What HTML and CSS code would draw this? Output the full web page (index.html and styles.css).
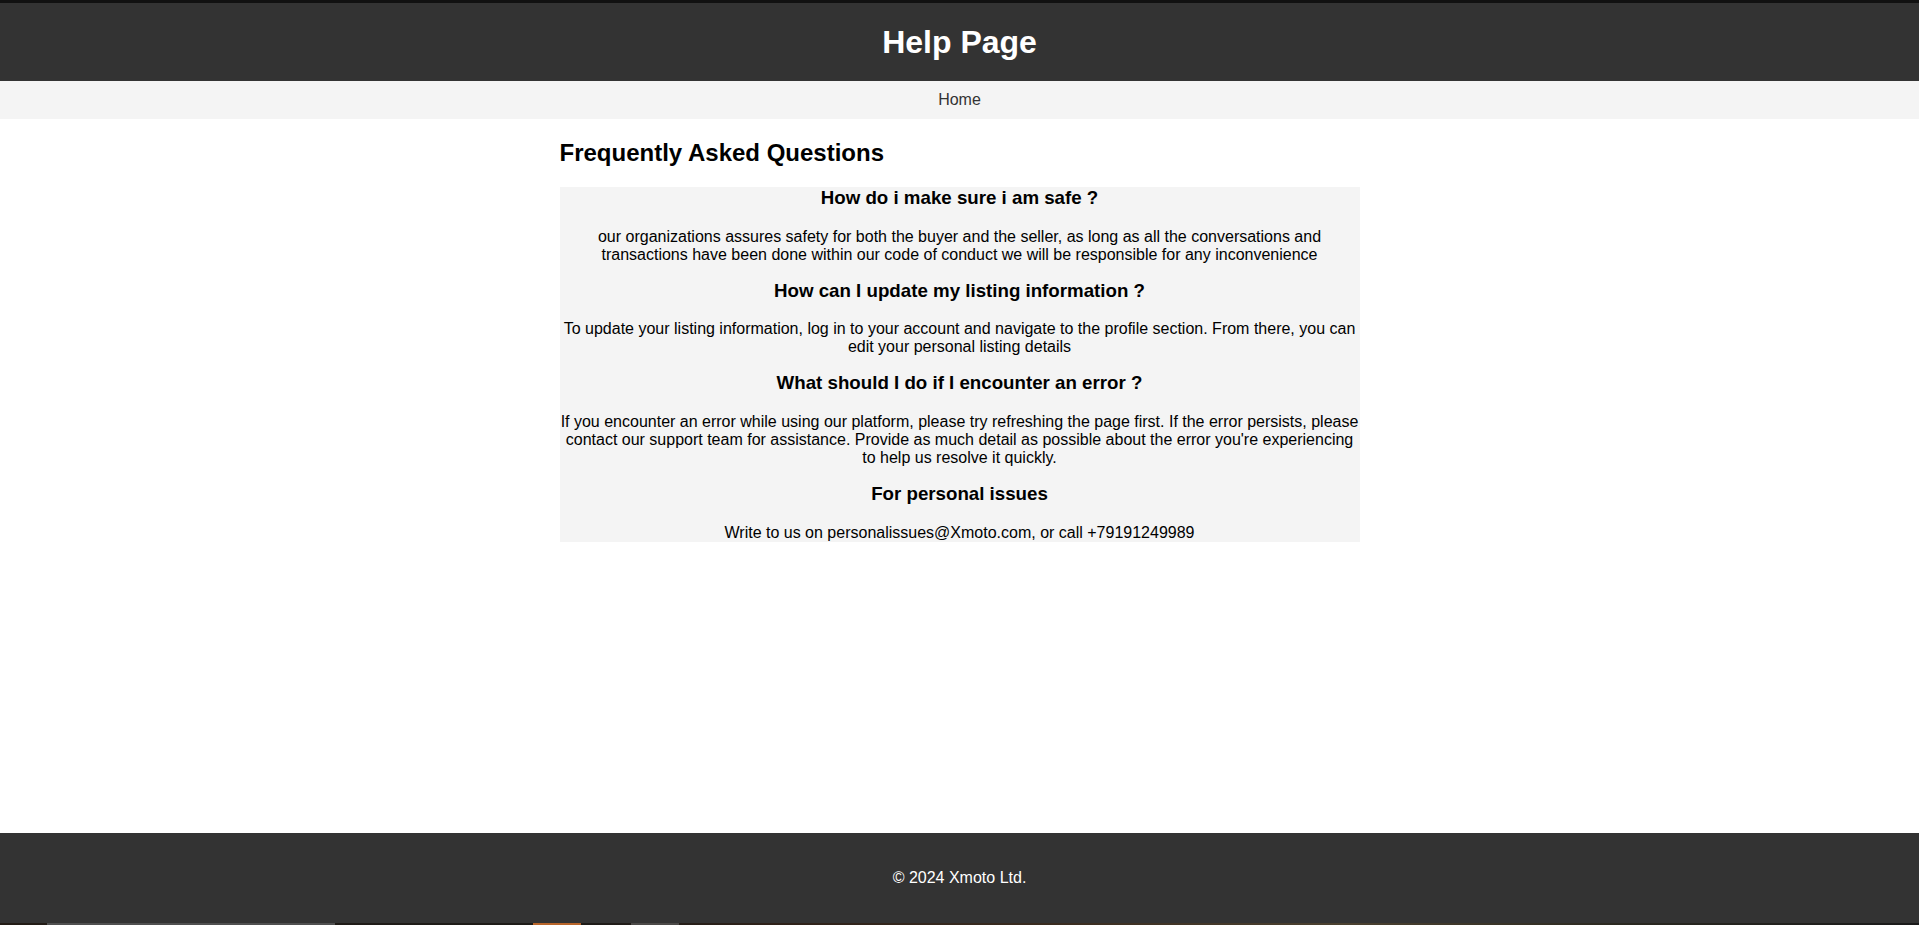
FILE: index.html
```html
<!DOCTYPE html>
<html lang="en">
<head>
<meta charset="utf-8">
<title>Help Page</title>
<link rel="stylesheet" href="styles.css">
</head>
<body>
<div class="page">
  <header class="site-header">
    <h1 class="site-title">Help Page</h1>
  </header>
  <nav class="site-nav">
    <a class="nav-link" href="#">Home</a>
  </nav>
  <main class="content">
    <h2 class="section-title">Frequently Asked Questions</h2>
    <div class="faq">
      <h3 class="faq-q">How do i make sure i am safe ?</h3>
      <p class="faq-a">our organizations assures safety for both the buyer and the seller, as long as all the conversations and transactions have been done within our code of conduct we will be responsible for any inconvenience</p>
      <h3 class="faq-q">How can I update my listing information ?</h3>
      <p class="faq-a">To update your listing information, log in to your account and navigate to the profile section. From there, you can edit your personal listing details</p>
      <h3 class="faq-q">What should I do if I encounter an error ?</h3>
      <p class="faq-a">If you encounter an error while using our platform, please try refreshing the page first. If the error persists, please contact our support team for assistance. Provide as much detail as possible about the error you're experiencing to help us resolve it quickly.</p>
      <h3 class="faq-q">For personal issues</h3>
      <p class="faq-a">Write to us on personalissues@Xmoto.com, or call +79191249989</p>
    </div>
  </main>
  <footer class="site-footer">
    <p class="copyright">&copy; 2024 Xmoto Ltd.</p>
    <div class="taskbar">
      <span class="tb-seg tb-window"></span>
      <span class="tb-seg tb-orange"></span>
      <span class="tb-seg tb-gray"></span>
    </div>
  </footer>
</div>
</body>
</html>
```

FILE: styles.css
```css
html, body {
  margin: 0;
  padding: 0;
}

body {
  font-family: "Liberation Sans", Arial, sans-serif;
  font-size: 16px;
  color: #000;
  background: #fff;
}

.page {
  min-height: 925px;
  display: flex;
  flex-direction: column;
}

.site-header {
  background: #333;
  color: #fff;
  border-top: 3px solid #111;
  padding: 21px 0 20px;
  text-align: center;
}

.site-title {
  margin: 0;
  font-size: 32px;
  font-weight: bold;
}

.site-nav {
  background: #f4f4f4;
  padding: 10px 0;
  text-align: center;
}

.nav-link {
  color: #333;
  text-decoration: none;
}

.content {
  flex: 1;
  width: 800px;
  margin: 0 auto;
}

.section-title {
  font-size: 24px;
  margin: 20px 0;
}

.faq {
  background: #f4f4f4;
  text-align: center;
}

.faq-q {
  font-size: 18.72px;
  margin: 16px 0 18.72px;
}

.faq-a {
  margin: 16px 0;
}

.site-footer {
  position: relative;
  background: #333;
  color: #fff;
  height: 92px;
  display: flex;
  align-items: center;
  justify-content: center;
}

.copyright {
  margin: 0;
  position: relative;
  top: -1px;
}

.taskbar {
  position: absolute;
  left: 0;
  right: 0;
  bottom: 0;
  height: 2px;
  background: linear-gradient(90deg, #231c16 0%, #1d1b18 30%, #2e2119 40%, #3a2c20 55%, #4b4130 70%, #2a2820 85%, #1a1a1a 100%);
}

.tb-seg {
  position: absolute;
  top: 0;
  height: 2px;
}

.tb-window {
  left: 47px;
  width: 288px;
  background: #505050;
}

.tb-orange {
  left: 533px;
  width: 48px;
  background: #b8652a;
}

.tb-gray {
  left: 631px;
  width: 48px;
  background: #4c4a48;
}
```
